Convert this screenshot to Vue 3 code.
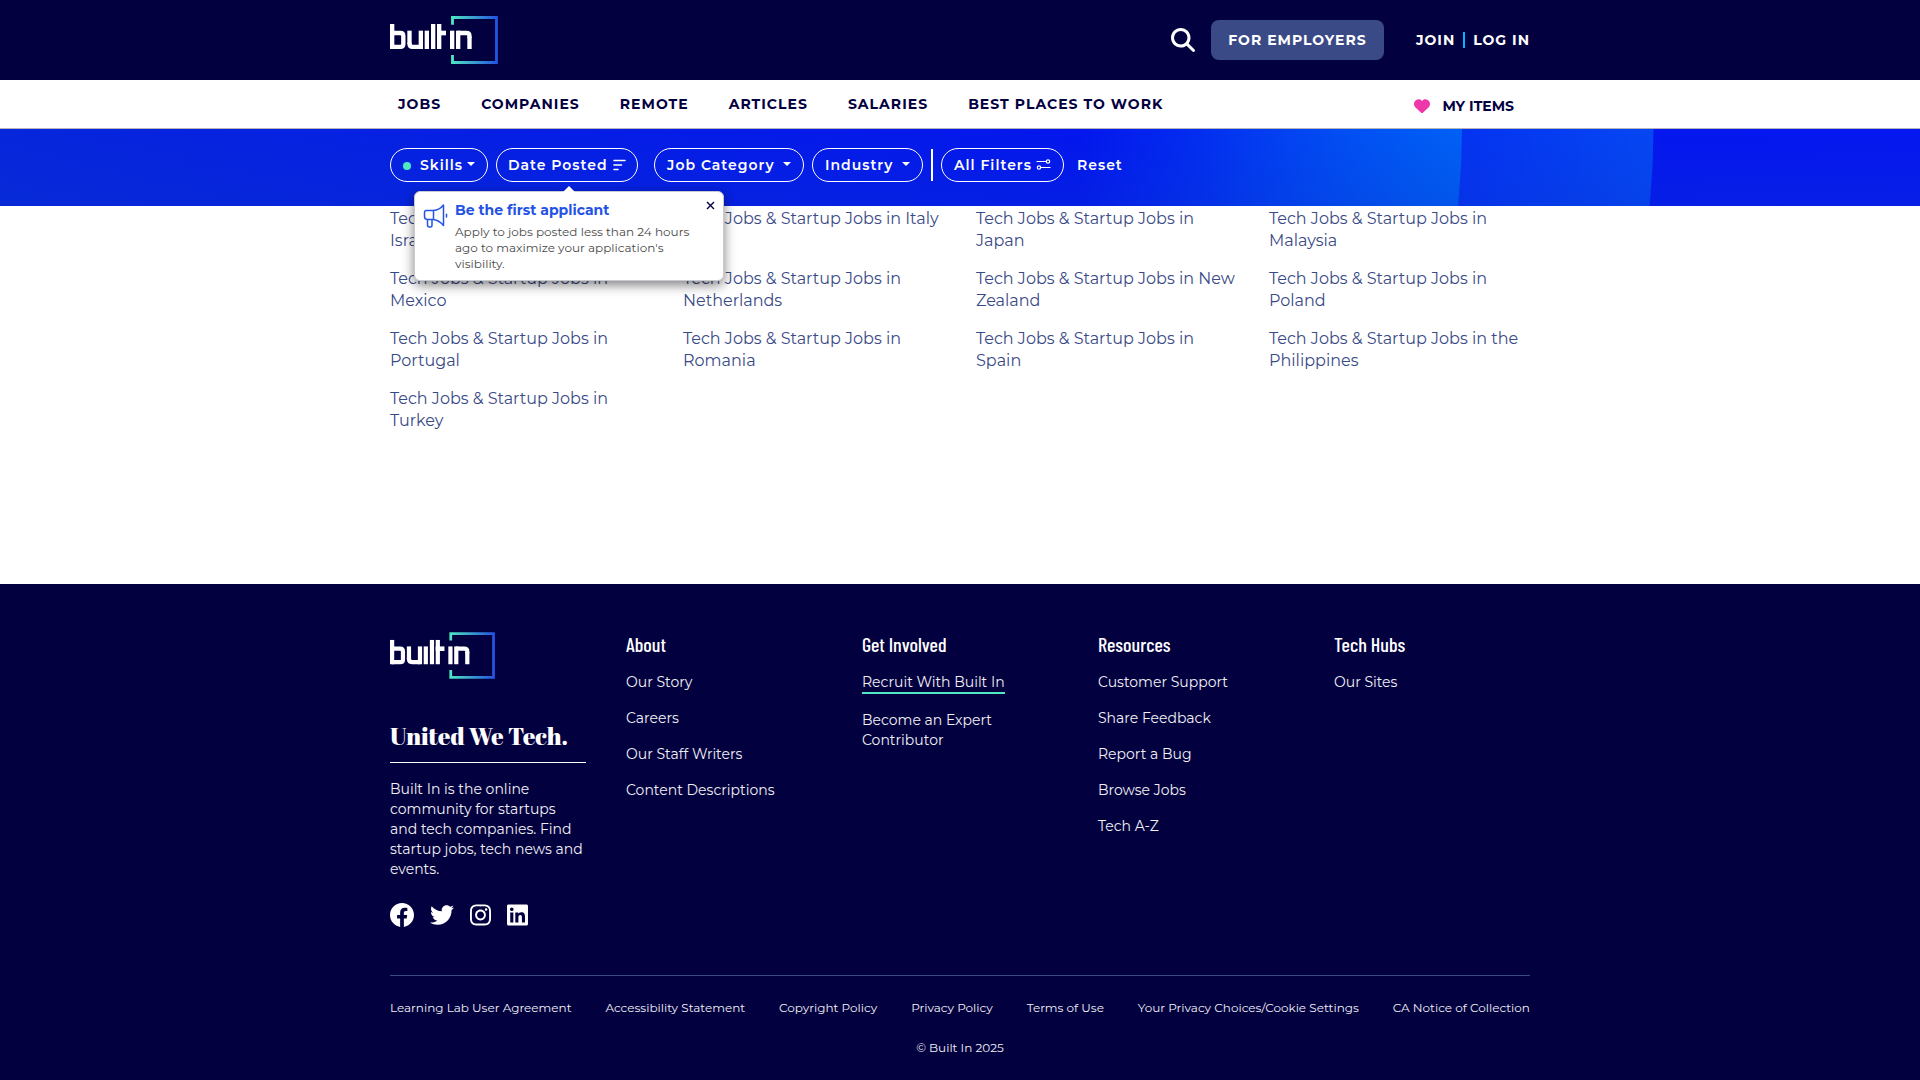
<script setup>
const nav = ['JOBS', 'COMPANIES', 'REMOTE', 'ARTICLES', 'SALARIES', 'BEST PLACES TO WORK']

const places = [
  'Israel', 'Italy', 'Japan', 'Malaysia',
  'Mexico', 'Netherlands', 'New Zealand', 'Poland',
  'Portugal', 'Romania', 'Spain', 'the Philippines',
  'Turkey',
]

const columns = [
  { title: 'About', links: ['Our Story', 'Careers', 'Our Staff Writers', 'Content Descriptions'] },
  { title: 'Get Involved', links: ['Recruit With Built In', 'Become an Expert Contributor'], marked: 0 },
  { title: 'Resources', links: ['Customer Support', 'Share Feedback', 'Report a Bug', 'Browse Jobs', 'Tech A-Z'] },
  { title: 'Tech Hubs', links: ['Our Sites'] },
]

const legal = [
  'Learning Lab User Agreement', 'Accessibility Statement', 'Copyright Policy', 'Privacy Policy',
  'Terms of Use', 'Your Privacy Choices/Cookie Settings', 'CA Notice of Collection',
]
</script>

<template>
  <div class="page">
    <svg width="0" height="0" class="defs" aria-hidden="true">
      <defs>
        <linearGradient id="edge" gradientUnits="userSpaceOnUse" x1="213" y1="0" x2="354" y2="0">
          <stop offset="0" stop-color="#4fe8c0" />
          <stop offset="1" stop-color="#2350e0" />
        </linearGradient>
        <symbol id="logo" viewBox="30 48 324 144">
          <g fill="#fff">
            <rect x="30" y="72" width="13" height="75" />
            <rect x="82" y="92" width="13" height="40" />
            <rect x="116" y="92" width="13" height="55" />
            <rect x="134" y="92" width="13" height="55" />
            <rect x="153" y="72" width="13" height="75" />
            <rect x="171" y="72" width="13" height="75" />
            <rect x="171" y="92" width="27" height="14" />
            <rect x="210" y="92" width="13" height="55" />
            <rect x="228" y="92" width="13" height="55" />
            <rect x="262" y="110" width="13" height="37" />
          </g>
          <g fill="none" stroke="#fff" stroke-width="13">
            <path d="M36 99H61Q70 99 70 108V132Q70 140.500 61 140.500H36" />
            <path d="M88.500 128V131Q88.500 140.500 98 140.500H122" />
            <path d="M234 99H259Q268.500 99 268.500 108V114" />
          </g>
          <path d="M217.500 74V52.500H349.500V187.500H217.500V165" fill="none" stroke="url(#edge)" stroke-width="8.500" />
        </symbol>
      </defs>
    </svg>

    <header class="top">
      <div class="wrap top-row">
        <svg class="logo" width="108" height="48"><use href="#logo" /></svg>
        <div class="actions">
          <svg class="search" width="24" height="24" viewBox="0 0 512 512" fill="#fff"><path d="M416 208c0 45.900-14.900 88.300-40 122.700L502.600 457.400c12.500 12.500 12.500 32.800 0 45.300s-32.800 12.500-45.300 0L330.700 376c-34.400 25.200-76.800 40-122.700 40C93.100 416 0 322.900 0 208S93.100 0 208 0S416 93.100 416 208zM208 352a144 144 0 1 0 0-288 144 144 0 1 0 0 288z" /></svg>
          <a class="employers">FOR EMPLOYERS</a>
          <a class="join">JOIN</a>
          <i class="bar"></i>
          <a class="login">LOG IN</a>
        </div>
      </div>
    </header>

    <nav class="nav">
      <div class="wrap nav-row">
        <a v-for="n in nav" :key="n">{{ n }}</a>
        <span class="items">
          <svg width="16" height="16" viewBox="0 0 512 512" fill="#ee37a8"><path d="M47.600 300.400L228.300 469.100c7.500 7 17.400 10.900 27.700 10.900s20.200-3.900 27.700-10.900L464.400 300.400c30.400-28.300 47.600-68 47.600-109.500v-5.800c0-69.900-50.500-129.500-119.400-141C347 36.500 300.600 51.400 268 84L256 96 244 84c-32.600-32.600-79-47.500-124.600-39.900C50.500 55.600 0 115.200 0 185.100v5.800c0 41.500 17.200 81.200 47.600 109.500z" /></svg>
          MY ITEMS
        </span>
      </div>
    </nav>

    <section class="filters">
      <svg class="backdrop" width="1920" height="77" viewBox="0 0 1920 77">
        <defs>
          <linearGradient id="base" x1="0" y1="0" x2="1" y2="0">
            <stop offset="0" stop-color="#0626dc" />
            <stop offset=".3" stop-color="#051de6" />
            <stop offset=".58" stop-color="#0316ee" />
            <stop offset="1" stop-color="#0517f0" />
          </linearGradient>
          <linearGradient id="shade" x1="0" y1="0" x2="0" y2="1">
            <stop offset="0" stop-color="#0a36c8" stop-opacity="0" />
            <stop offset="1" stop-color="#0a36c8" stop-opacity=".25" />
          </linearGradient>
          <linearGradient id="outer" gradientUnits="userSpaceOnUse" x1="1200" y1="0" x2="1654" y2="0">
            <stop offset="0" stop-color="#0547f3" stop-opacity="0" />
            <stop offset="1" stop-color="#0547f3" />
          </linearGradient>
          <linearGradient id="inner" gradientUnits="userSpaceOnUse" x1="1080" y1="0" x2="1462" y2="0">
            <stop offset="0" stop-color="#0060f5" stop-opacity="0" />
            <stop offset="1" stop-color="#0060f5" />
          </linearGradient>
        </defs>
        <rect width="1920" height="77" fill="url(#base)" />
        <circle cx="913.500" cy="0" r="740" fill="url(#outer)" />
        <circle cx="722" cy="0" r="740" fill="url(#inner)" />
        <rect width="1920" height="77" fill="url(#shade)" />
      </svg>
      <div class="wrap filter-row">
        <button class="pill skills"><i class="dot"></i>Skills<i class="caret"></i></button>
        <button class="pill posted">Date Posted
          <svg width="13" height="12" viewBox="0 0 13 12" stroke="#fff" stroke-width="1.600" stroke-linecap="round"><path d="M1 1.500h11M1 6h7.500M1 10.500h4" /></svg>
          <div class="tip">
            <svg class="horn" width="26" height="26" viewBox="0 0 26 26" fill="none" stroke="#2452e5" stroke-width="1.500" stroke-linejoin="round" stroke-linecap="round"><path d="M10.500 7.500H3.500Q1.500 7.500 1.500 9.500V13.500Q1.500 16.500 4.500 16.500H10.500ZM10.500 7.500Q16.500 7 20.500 2V22.500Q16.500 17.500 10.500 16.500M4.500 16.500V22Q4.500 24 6.500 24H7.500Q9 24 9 22V16.500M23.500 11.300V14" /></svg>
            <strong>Be the first applicant</strong>
            <p>Apply to jobs posted less than 24 hours ago to maximize your application's visibility.</p>
            <svg class="close" width="9" height="9" viewBox="0 0 9 9" stroke="#03003f" stroke-width="1.400"><path d="M1 1l7 7M8 1l-7 7" /></svg>
          </div>
        </button>
        <button class="pill category">Job Category<i class="caret"></i></button>
        <button class="pill industry">Industry<i class="caret"></i></button>
        <i class="split"></i>
        <button class="pill all">All Filters
          <svg width="15" height="11" viewBox="0 0 15 11" fill="none" stroke="#fff" stroke-width="1.200"><path d="M.5 2.500H10.200M4.800 8.500H14.500" /><circle cx="12" cy="2.500" r="1.700" /><circle cx="3" cy="8.500" r="1.700" /></svg>
        </button>
        <a class="reset">Reset</a>
      </div>
    </section>

    <main class="wrap places">
      <a v-for="p in places" :key="p">Tech Jobs &amp; Startup Jobs in {{ p }}</a>
    </main>

    <footer class="footer">
      <div class="wrap">
        <div class="foot-cols">
          <div class="brand">
            <svg width="105" height="47"><use href="#logo" /></svg>
            <h2>United We Tech.</h2>
            <p>Built In is the online community for startups and tech companies. Find startup jobs, tech news and events.</p>
            <div class="social">
              <svg width="24" height="24" viewBox="0 0 24 24" fill="#fff"><path d="M24 12.073c0-6.627-5.373-12-12-12s-12 5.373-12 12c0 5.990 4.388 10.954 10.125 11.854v-8.385H7.078v-3.470h3.047V9.430c0-3.007 1.792-4.669 4.533-4.669 1.312 0 2.686.235 2.686.235v2.953H15.830c-1.491 0-1.956.925-1.956 1.874v2.250h3.328l-.532 3.470h-2.796v8.385C19.612 23.027 24 18.062 24 12.073z" /></svg>
              <svg width="24" height="24" viewBox="0 0 512 512" fill="#fff"><path d="M459.370 151.716c.325 4.548.325 9.097.325 13.645 0 138.720-105.583 298.558-298.558 298.558-59.452 0-114.680-17.219-161.137-47.106 8.447.974 16.568 1.299 25.340 1.299 49.055 0 94.213-16.568 130.274-44.832-46.132-.975-84.792-31.188-98.112-72.772 6.498.974 12.995 1.624 19.818 1.624 9.421 0 18.843-1.300 27.614-3.573-48.081-9.747-84.143-51.980-84.143-102.985v-1.299c13.969 7.797 30.214 12.670 47.431 13.319-28.264-18.843-46.781-51.005-46.781-87.391 0-19.492 5.197-37.360 14.294-52.954 51.655 63.675 129.300 105.258 216.365 109.807-1.624-7.797-2.599-15.918-2.599-24.040 0-57.828 46.782-104.934 104.934-104.934 30.213 0 57.502 12.670 76.670 33.137 23.715-4.548 46.456-13.320 66.599-25.340-7.798 24.366-24.366 44.833-46.132 57.827 21.117-2.273 41.584-8.122 60.426-16.243-14.292 20.791-32.161 39.308-52.628 54.253z" /></svg>
              <svg width="21" height="24" viewBox="0 0 448 512" fill="#fff"><path d="M224.100 141c-63.600 0-114.900 51.300-114.900 114.900s51.300 114.900 114.900 114.900S339 319.500 339 255.900 287.700 141 224.100 141zm0 189.600c-41.100 0-74.700-33.500-74.700-74.700s33.500-74.700 74.700-74.700 74.700 33.500 74.700 74.700-33.600 74.700-74.700 74.700zm146.400-194.300c0 14.900-12 26.800-26.800 26.800-14.900 0-26.800-12-26.800-26.800s12-26.800 26.800-26.800 26.800 12 26.800 26.800zm76.100 27.200c-1.700-35.900-9.900-67.700-36.200-93.900-26.200-26.200-58-34.400-93.900-36.200-37-2.100-147.900-2.100-184.900 0-35.800 1.700-67.600 9.900-93.900 36.100s-34.400 58-36.200 93.900c-2.100 37-2.100 147.900 0 184.900 1.700 35.900 9.900 67.700 36.200 93.900s58 34.400 93.900 36.200c37 2.100 147.900 2.100 184.900 0 35.900-1.700 67.700-9.900 93.900-36.200 26.200-26.200 34.400-58 36.200-93.900 2.100-37 2.100-147.800 0-184.800zM398.800 388c-7.800 19.600-22.900 34.700-42.600 42.600-29.500 11.700-99.500 9-132.100 9s-102.700 2.600-132.100-9c-19.600-7.800-34.700-22.900-42.600-42.600-11.700-29.500-9-99.500-9-132.100s-2.600-102.700 9-132.100c7.800-19.600 22.900-34.700 42.600-42.600 29.500-11.700 99.500-9 132.100-9s102.700-2.600 132.100 9c19.600 7.800 34.700 22.900 42.600 42.600 11.700 29.500 9 99.500 9 132.100s2.700 102.700-9 132.100z" /></svg>
              <svg width="21" height="24" viewBox="0 0 448 512" fill="#fff"><path d="M416 32H31.900C14.300 32 0 46.500 0 64.300v383.400C0 465.500 14.300 480 31.900 480H416c17.600 0 32-14.500 32-32.300V64.300c0-17.800-14.400-32.300-32-32.300zM135.400 416H69V202.200h66.500V416zm-33.200-243c-21.300 0-38.500-17.300-38.500-38.500S80.900 96 102.200 96c21.200 0 38.500 17.300 38.500 38.500 0 21.300-17.200 38.500-38.500 38.500zm282.100 243h-66.400V312c0-24.800-.5-56.700-34.500-56.700-34.600 0-39.900 27-39.900 54.900V416h-66.400V202.200h63.700v29.200h.9c8.900-16.800 30.600-34.500 62.900-34.500 67.200 0 79.700 44.300 79.700 101.900V416z" /></svg>
            </div>
          </div>
          <div v-for="c in columns" :key="c.title" class="col">
            <h3>{{ c.title }}</h3>
            <a v-for="(l, i) in c.links" :key="l" :class="{ marked: c.marked === i }">{{ l }}</a>
          </div>
        </div>
        <div class="legal"><a v-for="l in legal" :key="l">{{ l }}</a></div>
        <p class="copy">© Built In 2025</p>
      </div>
    </footer>
  </div>
</template>

<style>
body { overflow: hidden; background: #fff; }
</style>

<style scoped>
.page { height: 1080px; display: flex; flex-direction: column; font-family: Montserrat, Inter, sans-serif; font-size: 14px; color: #03003f; }
.page * { box-sizing: border-box; }
.defs { position: absolute; }
.wrap { width: 1140px; margin: 0 auto; }
svg { display: block; flex: none; }
h2, h3, p { margin: 0; }

.top { height: 80px; flex: none; background: #03003f; }
.top-row { height: 80px; display: flex; align-items: center; justify-content: space-between; }
.actions { display: flex; align-items: center; color: #fff; font-weight: 700; letter-spacing: 1px; white-space: nowrap; }
.search { margin-right: 16px; }
.employers { width: 173px; height: 40px; line-height: 40px; border-radius: 8px; background: #3a4a86; text-align: center; margin-right: 32px; }
.bar { width: 2px; height: 16px; background: #00b4ff; margin: 0 8px; }

.nav { height: 49px; flex: none; border-bottom: 1px solid #b5b5b9; background: #fff; }
.nav-row { height: 48px; display: flex; align-items: center; gap: 40px; padding: 0 16px 0 8px; font-weight: 700; letter-spacing: 1.020px; white-space: nowrap; }
.items { margin-left: auto; padding-top: 3px; display: flex; align-items: center; gap: 12px; letter-spacing: 0; }

.filters { position: relative; z-index: 2; height: 77px; flex: none; }
.backdrop { position: absolute; inset: 0; }
.filter-row { position: relative; height: 72px; display: flex; align-items: center; }
.pill { position: relative; height: 34px; padding: 0 0 0 12px; margin: 0 8px 0 0; display: flex; align-items: center; border: 1px solid #fff; border-radius: 17px; background: none; color: #fff; font: 600 14px Montserrat, Inter, sans-serif; letter-spacing: 1px; white-space: nowrap; }
.pill > svg { position: absolute; right: 12px; top: 10px; }
.skills { width: 98px; }
.posted { width: 142px; margin-right: 16px; padding-left: 11px; }
.posted > svg { right: 11px; }
.category { width: 150px; }
.industry { width: 111px; }
.all { width: 123px; }
.dot { width: 8px; height: 8px; border-radius: 50%; background: #4fe8c0; margin-right: 9px; margin-top: 2px; }
.caret { position: absolute; right: 12px; top: 13px; border: 4px solid transparent; border-top-color: #fff; border-bottom: 0; }
.split { width: 2px; height: 32px; background: #fff; margin-right: 8px; }
.reset { color: #fff; font-weight: 600; letter-spacing: 1px; margin-left: 5px; }

.tip { position: absolute; left: -83px; top: 42px; width: 310px; height: 90px; padding: 8px 20px 0 40px; background: #fff; border-radius: 6px; border: 1px solid #c9c9d2; box-shadow: 0 4px 12px rgba(0, 0, 0, .5); text-align: left; white-space: normal; letter-spacing: 0; }
.tip::before { content: ''; position: absolute; left: 148px; top: -6px; border: 6px solid transparent; border-top: 0; border-bottom-color: #fff; }
.tip strong { display: block; font-weight: 700; line-height: 20px; color: #2452e5; }
.tip p { margin-top: 4px; font-weight: 400; font-size: 12px; line-height: 16px; color: #4a4a4a; }
.horn { position: absolute; left: 8px; top: 11px; }
.close { position: absolute; right: 8px; top: 9px; }

.places { flex: none; height: 378px; padding-top: 2px; display: grid; grid-template-columns: repeat(4, 261px); column-gap: 32px; row-gap: 16px; align-content: start; font-size: 16px; line-height: 22px; color: #3a4a86; }
.places a { height: 44px; }

.footer { flex: 1; background: #03003f; color: #f0f0f5; padding-top: 48px; }
.foot-cols { height: 343px; display: flex; gap: 40px; }
.brand { width: 196px; line-height: 20px; }
.brand h2 { font: 400 24px/32px 'Abril Fatface', 'Liberation Serif', serif; color: #fff; margin-top: 41px; padding-bottom: 10px; border-bottom: 1px solid #fff; }
.brand p { margin-top: 16px; }
.social { display: flex; gap: 16px; margin-top: 24px; }
.col { width: 196px; line-height: 20px; display: flex; flex-direction: column; align-items: flex-start; gap: 16px; }
.col h3 { font: 500 20px/24px 'Barlow Condensed', Roboto, sans-serif; color: #fff; }
.marked { border-bottom: 2px solid #4fe8c0; }
.legal { border-top: 1px solid #3a4a86; padding-top: 24px; display: flex; justify-content: space-between; font-size: 12px; line-height: 16px; white-space: nowrap; }
.copy { margin-top: 24px; text-align: center; font-size: 12px; line-height: 16px; }
</style>
